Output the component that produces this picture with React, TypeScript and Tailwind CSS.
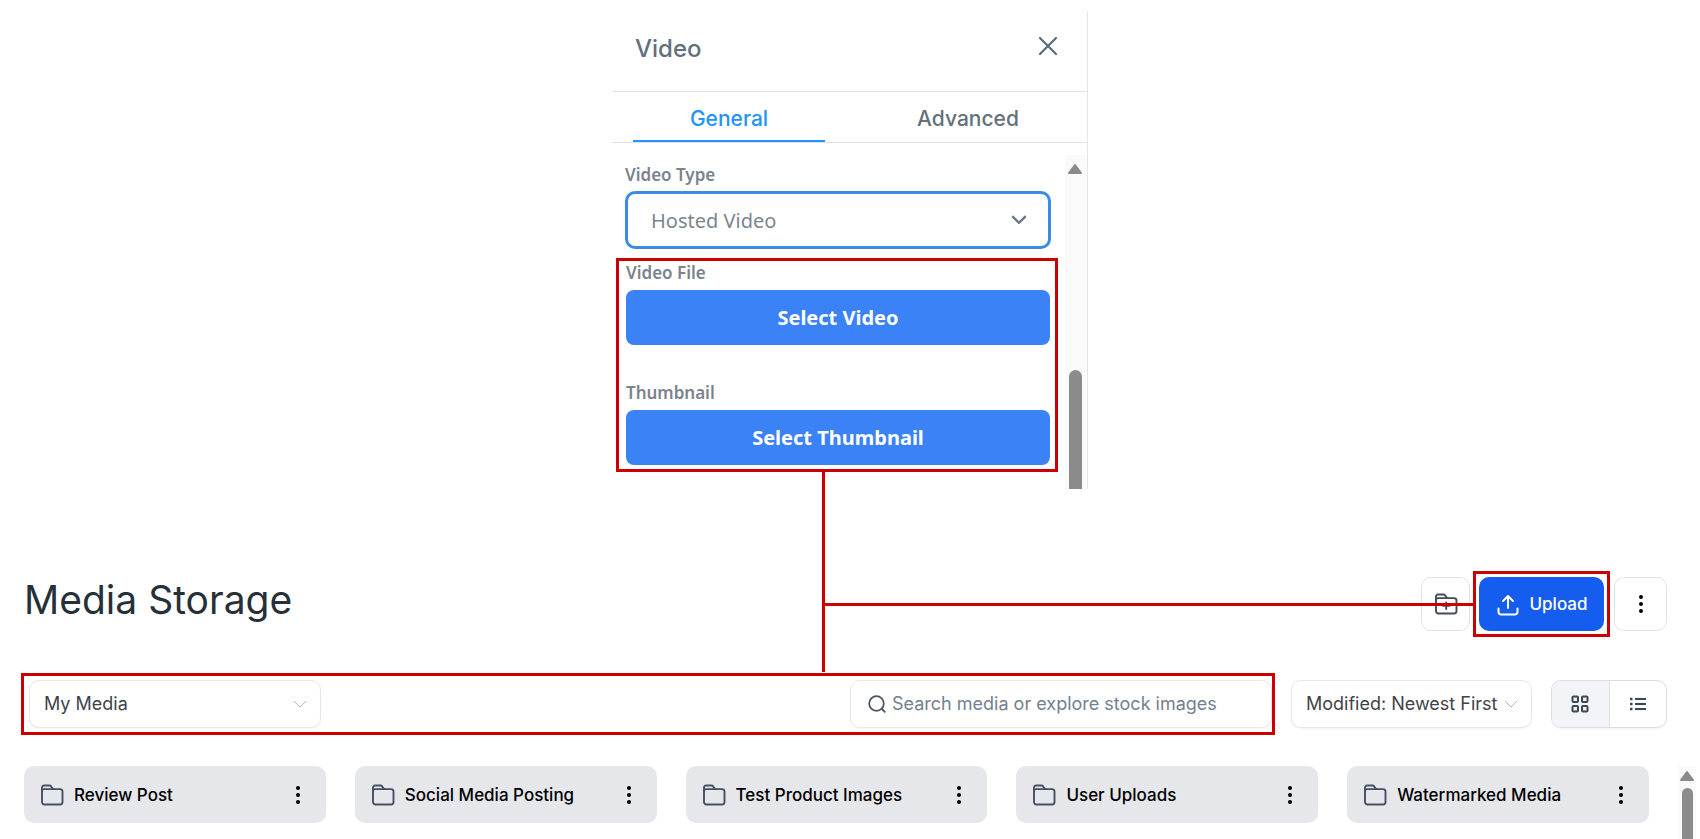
import React, { useState } from 'react';
import clsx from 'clsx';

const FOLDERS = [
  'Review Post',
  'Social Media Posting',
  'Test Product Images',
  'User Uploads',
  'Watermarked Media',
];

const FolderIcon = ({ plus = false }: { plus?: boolean }) => (
  <svg className="w-6 h-6 shrink-0" viewBox="0 0 24 24" fill="none" stroke="currentColor" strokeWidth="1.9" strokeLinecap="round" strokeLinejoin="round">
    <path d="M2 8V4.500A2 2 0 0 1 4 2.500h5.500a2 2 0 0 1 1.700.9l1 1.700a2 2 0 0 0 1.700 1H20a2.500 2.500 0 0 1 2.500 2.500V19a2.500 2.500 0 0 1-2.500 2.500H4.500A2.500 2.500 0 0 1 2 19z" />
    <path d="M2 8a2 2 0 0 1 2-1.900h10" />
    {plus && <path d="M12.200 10.500v6.600M9 13.800h6.500" />}
  </svg>
);

const DotsIcon = () => (
  <svg className="w-6 h-6 shrink-0" viewBox="0 0 24 24" fill="currentColor">
    <circle cx="12" cy="5" r="2" />
    <circle cx="12" cy="12" r="2" />
    <circle cx="12" cy="19" r="2" />
  </svg>
);

const UploadIcon = () => (
  <svg className="w-6 h-6" viewBox="0 0 24 24" fill="none" stroke="currentColor" strokeWidth="2" strokeLinecap="round" strokeLinejoin="round">
    <path d="M12 15V3M7 8l5-5 5 5" />
    <path d="M2.500 15.500V19A2.500 2.500 0 0 0 5 21.500h14a2.500 2.500 0 0 0 2.500-2.500v-3.500" />
  </svg>
);

const Chevron = ({ className }: { className: string }) => (
  <svg className={clsx('pointer-events-none absolute', className)} viewBox="0 0 14 8" fill="none" stroke="currentColor">
    <path d="M1 1l6 6 6-6" />
  </svg>
);

const ArrowUp = () => (
  <svg className="w-4 h-3" viewBox="0 0 16 12" fill="#8b8b8b" stroke="#8b8b8b" strokeWidth="2" strokeLinejoin="round">
    <path d="M8 2l6 8H2z" />
  </svg>
);

const PickerField = ({ id, label, action }: { id: string; label: string; action: string }) => (
  <div className="flex flex-col">
    <label htmlFor={id} className="font-semibold text-[17px] leading-6 text-[#7b838e]">{label}</label>
    <button id={id} className="mt-[5px] h-[55px] rounded-lg bg-[#3b82f6] text-xl font-bold text-white">{action}</button>
  </div>
);

const VideoPanel = () => {
  const [tab, setTab] = useState('General');

  return (
    <aside className="w-[476px] mx-auto border-r border-[#e2e5e9]">
      <div className="flex h-[81px] items-center justify-between border-b border-[#dde3e8] pl-[23px] pr-[29px] pb-2.5">
        <h2 className="pt-1.5 text-2xl font-medium text-[#64707a]">Video</h2>
        <button aria-label="Close" className="text-[#5b6b75]">
          <svg className="w-5 h-5" viewBox="0 0 20 20" fill="none" stroke="currentColor" strokeWidth="2.2" strokeLinecap="round">
            <path d="M2 2l16 16M18 2L2 18" />
          </svg>
        </button>
      </div>

      <div className="flex h-[51px] justify-between border-b border-[#dde3e8] pl-[21px] pr-[23px]">
        {['General', 'Advanced'].map(name => (
          <button
            key={name}
            onClick={() => setTab(name)}
            className={clsx(
              'w-48 border-b-2 pt-1.5 text-[21px] font-medium',
              tab === name ? 'border-[#2492ff] text-[#2492ff]' : 'border-transparent text-[#64707a]'
            )}
          >
            {name}
          </button>
        ))}
      </div>

      <div className="flex pt-3 font-['Noto_Sans',sans-serif]">
        <div className="flex-1 pl-1 pr-[7px] pb-[17px]">
          <div className="pl-[9px] pr-[7px] pb-[9px]">
            <label htmlFor="video-type" className="block pt-2 text-[17px] font-semibold leading-6 text-[#7b838e]">Video Type</label>
            <div className="relative mt-1">
              <select id="video-type" className="block w-full h-[58px] appearance-none rounded-[10px] border-3 border-[#3a8be8] bg-white pl-[23px] pt-0.5 text-xl text-[#7b858e]">
                <option>Hosted Video</option>
              </select>
              <Chevron className="right-6 top-6 h-[9px] w-4 stroke-2 text-[#6b7685]" />
            </div>
          </div>
          <div className="relative flex flex-col gap-9 border-3 border-[#cc0000] pl-[7px] pr-[5px] pb-1">
            <PickerField id="video-file" label="Video File" action="Select Video" />
            <PickerField id="thumbnail" label="Thumbnail" action="Select Thumbnail" />
            <span className="absolute left-[203px] top-full h-[203px] w-[3px] bg-[#cc0000]" />
          </div>
        </div>
        <div className="flex w-[22px] flex-col items-center bg-[#fafafa] pt-2 pr-0.5">
          <ArrowUp />
          <div className="mt-auto h-[119px] w-[13px] rounded-t-full bg-[#8b8b8b]" />
        </div>
      </div>
    </aside>
  );
};

const MediaStorage = () => {
  const [view, setView] = useState('grid');

  return (
    <main className="pt-[82px]">
      <header className="relative flex items-center justify-between pl-6 pr-[33px]">
        <h1 className="pb-2.5 text-[39px] leading-none text-[#263038]">Media Storage</h1>
        <div className="flex items-center">
          <button aria-label="New folder" className="flex h-[54px] w-[49px] items-center justify-center rounded-[10px] border border-[#dfe3e8] text-[#414b5a]">
            <FolderIcon plus />
          </button>
          <div className="ml-[3px] border-3 border-[#cc0000] p-[3px]">
            <button className="flex h-[54px] w-[125px] items-center justify-center gap-2.5 rounded-[10px] bg-[#155dee] pt-0.5 text-[17px] font-medium text-white">
              <UploadIcon />
              Upload
            </button>
          </div>
          <button aria-label="More actions" className="ml-1 flex h-[54px] w-[53px] items-center justify-center rounded-[10px] border border-[#dfe3e8] text-black">
            <DotsIcon />
          </button>
        </div>
        <span className="absolute left-[calc(50%-27px)] right-[227px] top-8 h-[3px] bg-[#cc0000]" />
      </header>

      <div className="mt-9 flex items-center pl-[21px] pr-[33px]">
        <div className="flex flex-1 justify-between border-3 border-[#cc0000] py-1 pl-[5px]">
          <div className="relative">
            <select aria-label="Library" className="h-12 w-[292px] appearance-none rounded-[10px] border border-[#e5e7eb] bg-white pl-3.5 text-lg text-[#3f4348] shadow-xs">
              <option>My Media</option>
            </select>
            <Chevron className="right-3.5 top-5 h-2 w-3.5 text-[#b5b8bc]" />
          </div>
          <label className="flex h-12 w-[422px] items-center gap-1.5 rounded-[10px] border border-[#e5e7eb] pl-[17px] shadow-xs">
            <svg className="w-[18px] h-[18px] shrink-0 text-[#4b5563]" viewBox="0 0 18 18" fill="none" stroke="currentColor" strokeWidth="1.8" strokeLinecap="round">
              <circle cx="8.5" cy="8.5" r="7.3" />
              <path d="M14 14l2.8 2.8" />
            </svg>
            <input aria-label="Search media" placeholder="Search media or explore stock images" className="min-w-0 flex-1 text-lg outline-none placeholder:text-[#76808f]" />
          </label>
        </div>
        <div className="relative ml-4">
          <select aria-label="Sort" className="h-12 w-[241px] appearance-none rounded-[10px] border border-[#e5e7eb] bg-white pl-3.5 text-lg text-[#3f4348] shadow-xs">
            <option>Modified: Newest First</option>
          </select>
          <Chevron className="right-3.5 top-5 h-2 w-3.5 text-[#b5b8bc]" />
        </div>
        <div className="ml-[19px] flex h-12 w-[116px] overflow-hidden rounded-[10px] border border-[#d9dee4] text-[#3d4756] shadow-xs">
          <button aria-label="Grid view" onClick={() => setView('grid')} className={clsx('flex flex-1 items-center justify-center border-r border-[#d9dee4]', view === 'grid' && 'bg-[#f2f4f8]')}>
            <svg className="w-[18px] h-[18px]" viewBox="0 0 18 18" fill="none" stroke="currentColor" strokeWidth="2">
              <rect x="1.5" y="1.5" width="5.5" height="5.5" rx="1" />
              <rect x="11" y="1.5" width="5.5" height="5.5" rx="1" />
              <rect x="1.5" y="11" width="5.5" height="5.5" rx="1" />
              <rect x="11" y="11" width="5.5" height="5.5" rx="1" />
            </svg>
          </button>
          <button aria-label="List view" onClick={() => setView('list')} className={clsx('flex flex-1 items-center justify-center', view === 'list' && 'bg-[#f2f4f8]')}>
            <svg className="w-[18px] h-[18px]" viewBox="0 0 18 18" fill="none" stroke="currentColor" strokeWidth="2">
              <path d="M6 4h11M6 9h11M6 14h11" />
              <path d="M1 4h2.500M1 9h2.500M1 14h2.500" strokeWidth="2.5" />
            </svg>
          </button>
        </div>
      </div>

      <div className="mt-[31px] flex pl-6 pr-1">
        <div className="grid flex-1 grid-cols-5 gap-[29px]">
          {FOLDERS.map(name => (
            <div key={name} className="flex h-[57px] items-center rounded-[10px] bg-[#e5e7eb] pl-4 pr-4">
              <span className="flex text-[#465064]"><FolderIcon /></span>
              <span className="ml-2.5 flex-1 truncate pt-0.5 text-[17px] font-medium text-black">{name}</span>
              <button aria-label={`${name} options`} className="text-black"><DotsIcon /></button>
            </div>
          ))}
        </div>
        <div className="ml-[29px] flex h-[73px] w-[18px] flex-col items-center bg-[#fafafa] pt-1">
          <ArrowUp />
          <div className="mt-1.5 w-[11px] flex-1 rounded-t-full bg-[#8b8b8b]" />
        </div>
      </div>
    </main>
  );
};

export default function App() {
  return (
    <div className="min-h-screen overflow-hidden bg-white pt-[11px] font-['Inter',sans-serif]">
      <VideoPanel />
      <MediaStorage />
    </div>
  );
}
